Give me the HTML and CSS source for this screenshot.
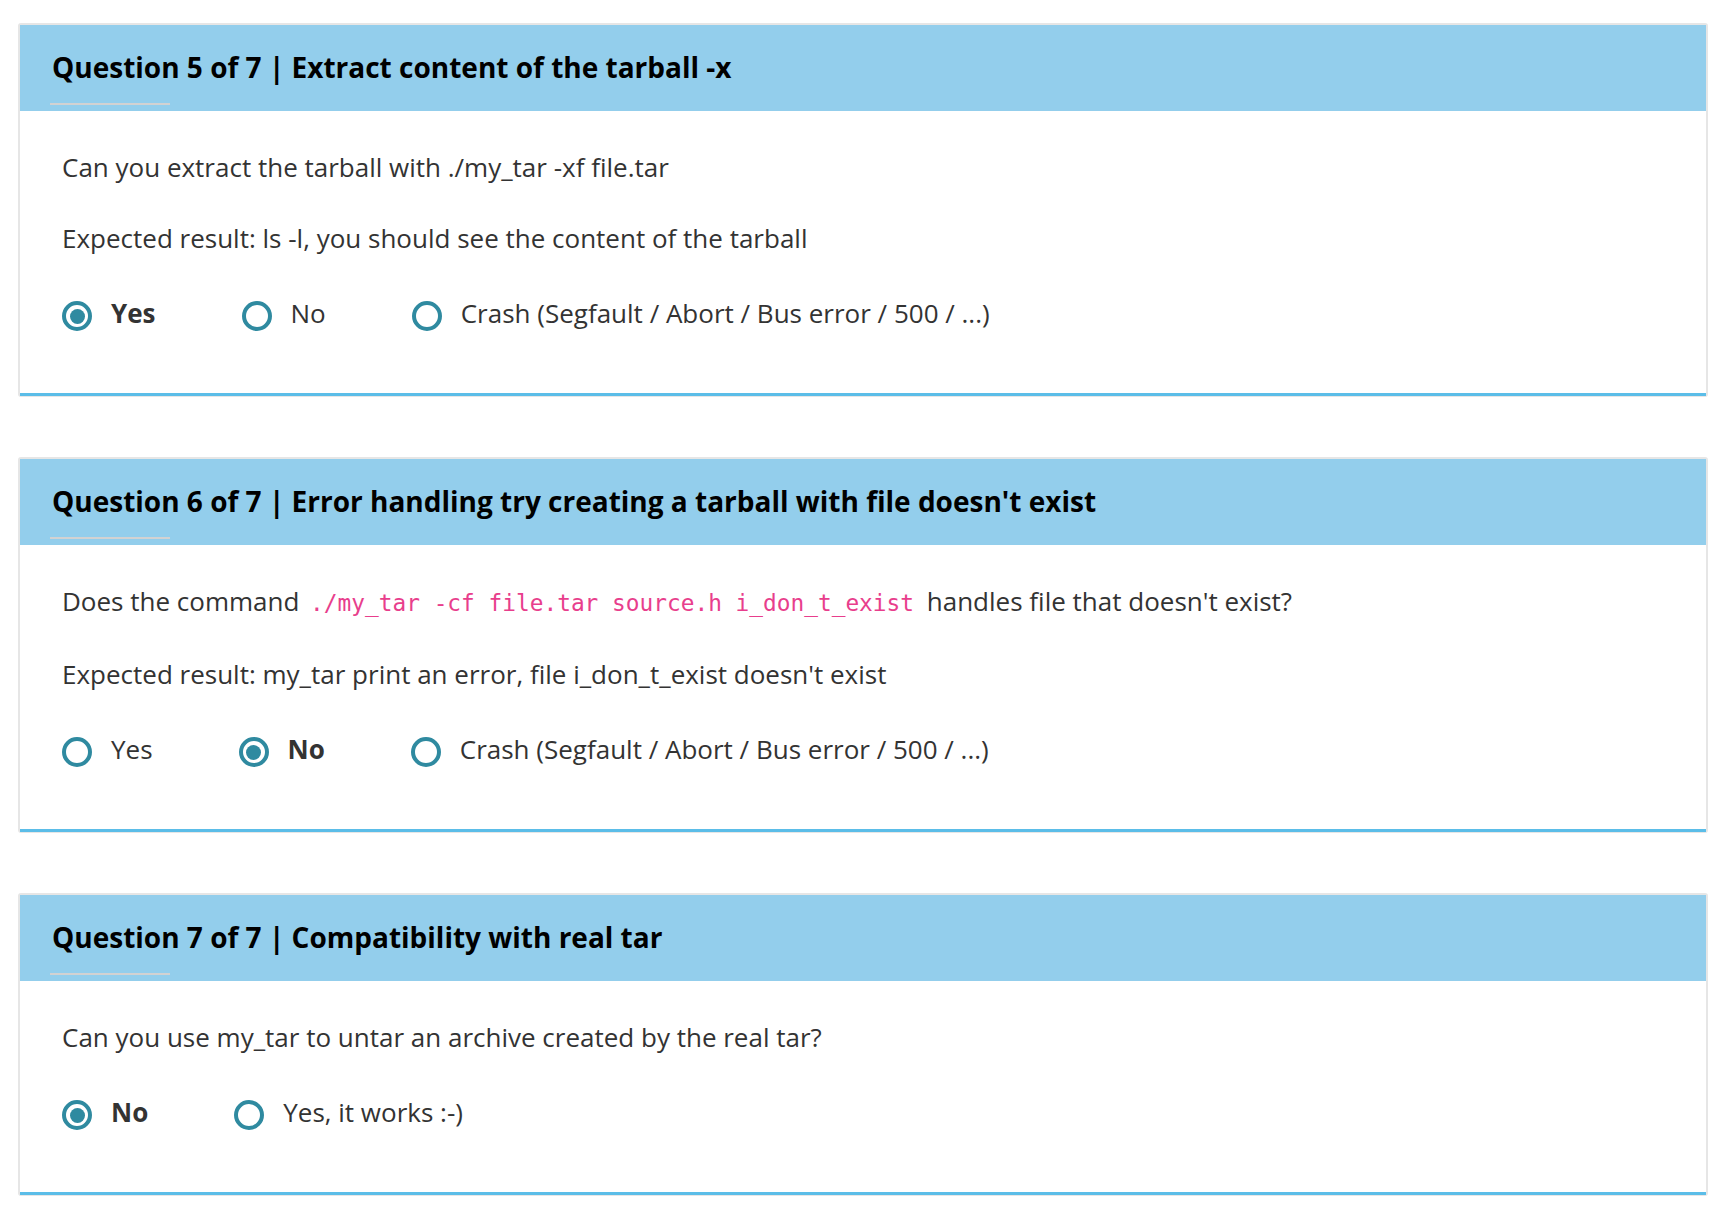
FILE: index.html
```html
<!DOCTYPE html>
<html lang="en">
<head>
<meta charset="utf-8">
<title>Questions</title>
<link rel="stylesheet" href="styles.css">
</head>
<body>
<main class="page">
  <section class="card">
    <header class="card-head">
      <h2 class="card-title">Question 5 of 7 | Extract content of the tarball -x</h2>
      <div class="title-rule"></div>
    </header>
    <div class="card-body">
      <p class="para">Can you extract the tarball with ./my_tar -xf file.tar</p>
      <p class="para">Expected result: ls -l, you should see the content of the tarball</p>
      <div class="options">
        <label class="option checked"><span class="radio"></span><span class="opt-label">Yes</span></label>
        <label class="option"><span class="radio"></span><span class="opt-label">No</span></label>
        <label class="option"><span class="radio"></span><span class="opt-label">Crash (Segfault / Abort / Bus error / 500 / ...)</span></label>
      </div>
    </div>
  </section>

  <section class="card">
    <header class="card-head">
      <h2 class="card-title">Question 6 of 7 | Error handling try creating a tarball with file doesn't exist</h2>
      <div class="title-rule"></div>
    </header>
    <div class="card-body">
      <p class="para">Does the command <code class="code">./my_tar -cf file.tar source.h i_don_t_exist</code> handles file that doesn't exist?</p>
      <p class="para">Expected result: my_tar print an error, file i_don_t_exist doesn't exist</p>
      <div class="options">
        <label class="option"><span class="radio"></span><span class="opt-label">Yes</span></label>
        <label class="option checked"><span class="radio"></span><span class="opt-label">No</span></label>
        <label class="option"><span class="radio"></span><span class="opt-label">Crash (Segfault / Abort / Bus error / 500 / ...)</span></label>
      </div>
    </div>
  </section>

  <section class="card">
    <header class="card-head">
      <h2 class="card-title">Question 7 of 7 | Compatibility with real tar</h2>
      <div class="title-rule"></div>
    </header>
    <div class="card-body">
      <p class="para">Can you use my_tar to untar an archive created by the real tar?</p>
      <div class="options">
        <label class="option checked"><span class="radio"></span><span class="opt-label">No</span></label>
        <label class="option"><span class="radio"></span><span class="opt-label">Yes, it works :-)</span></label>
      </div>
    </div>
  </section>
</main>
</body>
</html>
```

FILE: styles.css
```css
html, body {
  margin: 0;
  padding: 0;
  background: #ffffff;
}

body {
  font-family: "Open Sans", "Liberation Sans", sans-serif;
  color: #333333;
}

.page {
  padding: 23px 20px 0 18px;
  display: flex;
  flex-direction: column;
  gap: 60px;
}

.card {
  border: 2px solid #e6e6e6;
  border-bottom-width: 1px;
  border-radius: 3px;
  background: #ffffff;
}

.card-head {
  background: #93ceec;
  padding: 23px 32px 6px;
}

.card-title {
  margin: 0;
  font-size: 28px;
  line-height: 38px;
  font-weight: 700;
  color: #000000;
}

.title-rule {
  width: 120px;
  height: 2px;
  margin: 17px 0 0 -2px;
  background: #d2d2d2;
}

.card-body {
  padding: 39px 42px 62px;
  border-bottom: 3px solid #5bbde8;
}

.para {
  margin: 0 0 37px;
  font-size: 26px;
  line-height: 34px;
}

.code {
  font-family: "DejaVu Sans Mono", "Liberation Mono", monospace;
  font-size: 22.8px;
  color: #e83e8c;
  padding: 0 6px 0 4px;
}

.options {
  display: flex;
  align-items: flex-start;
  margin-top: 41px;
}

.option {
  display: flex;
  align-items: flex-start;
  margin-right: 86px;
  font-size: 26px;
  line-height: 34px;
  color: #333333;
}

.radio {
  box-sizing: border-box;
  width: 30px;
  height: 30px;
  margin-top: 5px;
  margin-right: 19px;
  border: 4px solid #2f8aa0;
  border-radius: 50%;
  display: flex;
  align-items: center;
  justify-content: center;
}

.option.checked .radio::after {
  content: "";
  width: 15px;
  height: 15px;
  border-radius: 50%;
  background: #2f8aa0;
}

.option.checked .opt-label {
  font-weight: 700;
}
```
